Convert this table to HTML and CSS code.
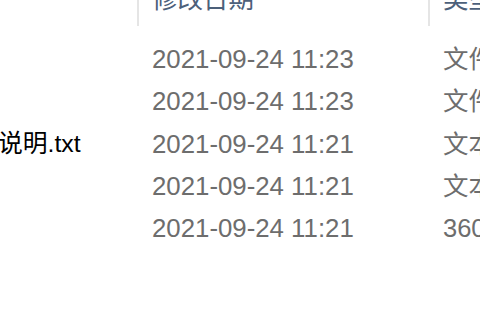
FILE: index.html
```html
<!DOCTYPE html>
<html lang="zh">
<head>
<meta charset="utf-8">
<link rel="stylesheet" href="styles.css">
</head>
<body>
<div class="list">
  <div class="header">
    <div class="hcell name-col"></div>
    <div class="hcell date-col sep">修改日期</div>
    <div class="hcell type-col sep">类型</div>
  </div>
  <div class="rows">
    <div class="row"><div class="cell name"></div><div class="cell date">2021-09-24 11:23</div><div class="cell type">文件夹</div></div>
    <div class="row"><div class="cell name"></div><div class="cell date">2021-09-24 11:23</div><div class="cell type">文件夹</div></div>
    <div class="row"><div class="cell name">说明.txt</div><div class="cell date">2021-09-24 11:21</div><div class="cell type">文本文档</div></div>
    <div class="row"><div class="cell name"></div><div class="cell date">2021-09-24 11:21</div><div class="cell type">文本文档</div></div>
    <div class="row"><div class="cell name"></div><div class="cell date">2021-09-24 11:21</div><div class="cell type">360压缩 ZIP 文件</div></div>
  </div>
</div>
</body>
</html>
```

FILE: styles.css
```css
html, body {
  margin: 0;
  padding: 0;
  width: 480px;
  height: 320px;
  overflow: hidden;
  background: #ffffff;
}

.list {
  font-family: "Liberation Sans", "Noto Sans CJK SC", sans-serif;
  font-size: 25.5px;
  width: 480px;
}

.header {
  display: grid;
  grid-template-columns: 137px 291px 1fr;
  height: 41px;
  margin-top: -15px;
  color: #4c607a;
  line-height: 29px;
}

.hcell {
  white-space: nowrap;
  overflow: hidden;
  padding-left: 13px;
}

.sep {
  border-left: 2px solid #e5e5e5;
}

.rows {
  display: grid;
  grid-auto-rows: 42.3px;
  margin-top: 12px;
}

.row {
  display: grid;
  grid-template-columns: 137px 291px 1fr;
  line-height: 42px;
}

.cell {
  white-space: nowrap;
  overflow: hidden;
}

.name {
  color: #000000;
  font-size: 24.8px;
  text-indent: -2px;
}

.date {
  color: #6d6d6d;
  font-size: 25.8px;
  padding-left: 15px;
}

.type {
  color: #6d6d6d;
  padding-left: 15px;
}
```
